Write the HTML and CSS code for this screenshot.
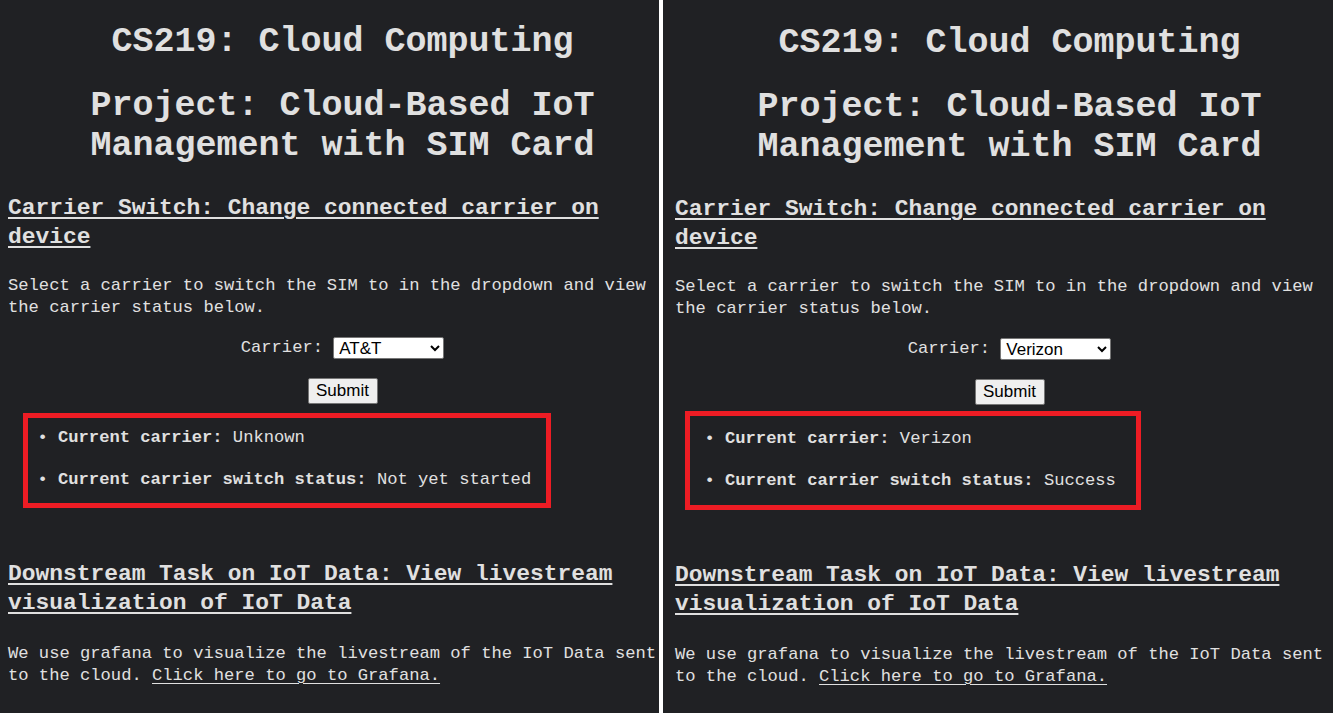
FILE: index.html
```html
<!DOCTYPE html>
<html lang="en">
<head>
<meta charset="utf-8">
<title>CS219: Cloud Computing</title>
<link rel="stylesheet" href="styles.css">
</head>
<body>
<div class="pane pane-left">
  <div class="page">
    <h1 class="title">CS219: Cloud Computing</h1>
    <h1 class="title title-project">Project: Cloud-Based IoT Management with SIM Card</h1>
    <h2 class="section">Carrier Switch: Change connected carrier on device</h2>
    <p class="text">Select a carrier to switch the SIM to in the dropdown and view the carrier status below.</p>
    <form class="carrier-form">
      <div class="carrier-row">
        <label class="carrier-label" for="carrier-left">Carrier:</label>
        <select class="carrier-select" id="carrier-left">
          <option selected>AT&amp;T</option>
          <option>Verizon</option>
          <option>T-Mobile</option>
        </select>
      </div>
      <div class="submit-row">
        <button class="submit-btn" type="button">Submit</button>
      </div>
    </form>
    <ul class="status">
      <li><b>Current carrier:</b> Unknown</li>
      <li><b>Current carrier switch status:</b> Not yet started</li>
    </ul>
    <h2 class="section section-downstream">Downstream Task on IoT Data: View livestream visualization of IoT Data</h2>
    <p class="text text-grafana">We use grafana to visualize the livestream of the IoT Data sent to the cloud. <a class="link" href="#">Click here to go to Grafana.</a></p>
    <div class="annot annot-left"></div>
  </div>
</div>
<div class="divider"></div>
<div class="pane pane-right">
  <div class="page">
    <h1 class="title">CS219: Cloud Computing</h1>
    <h1 class="title title-project">Project: Cloud-Based IoT Management with SIM Card</h1>
    <h2 class="section">Carrier Switch: Change connected carrier on device</h2>
    <p class="text">Select a carrier to switch the SIM to in the dropdown and view the carrier status below.</p>
    <form class="carrier-form">
      <div class="carrier-row">
        <label class="carrier-label" for="carrier-right">Carrier:</label>
        <select class="carrier-select" id="carrier-right">
          <option>AT&amp;T</option>
          <option selected>Verizon</option>
          <option>T-Mobile</option>
        </select>
      </div>
      <div class="submit-row">
        <button class="submit-btn" type="button">Submit</button>
      </div>
    </form>
    <ul class="status">
      <li><b>Current carrier:</b> Verizon</li>
      <li><b>Current carrier switch status:</b> Success</li>
    </ul>
    <h2 class="section section-downstream">Downstream Task on IoT Data: View livestream visualization of IoT Data</h2>
    <p class="text text-grafana">We use grafana to visualize the livestream of the IoT Data sent to the cloud. <a class="link" href="#">Click here to go to Grafana.</a></p>
    <div class="annot annot-right"></div>
  </div>
</div>
</body>
</html>
```

FILE: styles.css
```css
html, body {
  margin: 0;
  padding: 0;
  height: 100%;
  overflow: hidden;
  background: #202124;
}

body {
  display: flex;
  font-family: "Liberation Mono", "DejaVu Sans Mono", monospace;
  font-size: 17.15px;
  line-height: 22px;
  color: #e0e0e0;
}

.pane {
  flex: none;
  height: 713px;
  overflow: hidden;
  background: #202124;
  box-sizing: border-box;
}

.pane-left {
  width: 659px;
}

.divider {
  flex: none;
  width: 4px;
  height: 713px;
  background: #ffffff;
}

.pane-right {
  width: 670px;
  padding-left: 4px;
  padding-top: 1px;
}

.page {
  position: relative;
  display: flow-root;
  width: 685px;
  padding: 0 8px;
  box-sizing: border-box;
}

.title {
  margin: 22px 0 0;
  font-family: "Liberation Mono", monospace;
  font-size: 35px;
  line-height: 40px;
  font-weight: bold;
  text-align: center;
}

.title-project {
  margin-top: 24px;
}

.section {
  margin: 28px 0 0;
  font-size: 22.9px;
  line-height: 29px;
  font-weight: bold;
  text-decoration: underline;
  text-decoration-thickness: 2px;
  text-underline-offset: 3px;
}

.text {
  margin: 23px 0 0;
}

.carrier-form {
  margin: 0;
}

.carrier-row {
  margin-top: 18px;
  height: 22px;
  display: flex;
  justify-content: center;
  align-items: center;
  gap: 10.3px;
}

.carrier-label {
  white-space: nowrap;
}

.carrier-select {
  width: 111px;
  height: 22px;
  margin: 0;
  font-family: "Liberation Sans", Arial, sans-serif;
  font-size: 17px;
  color: #000000;
  background-color: #ffffff;
  border: 1px solid #767676;
  border-radius: 2px;
  padding: 0 0 0 1px;
  box-sizing: border-box;
}

.submit-row {
  margin-top: 19px;
  display: flex;
  justify-content: center;
}

.submit-btn {
  width: 70px;
  height: 26px;
  margin: 0;
  padding: 0 6px;
  font-family: "Liberation Sans", Arial, sans-serif;
  font-size: 17px;
  line-height: 22px;
  color: #000000;
  background: #efefef;
  border: 1px solid #767676;
  border-radius: 2px;
  box-sizing: border-box;
}

.status {
  margin: 23px 0 0;
  padding-left: 50px;
  list-style-type: "\2022  ";
}

.status li + li {
  margin-top: 20px;
}

.section-downstream {
  margin-top: 69px;
}

.text-grafana {
  margin-top: 25px;
}

.link {
  color: inherit;
  text-decoration: underline;
  text-decoration-thickness: 1px;
  text-underline-offset: 3px;
}

.annot {
  position: absolute;
  border: 5px solid #ed1c24;
  box-sizing: border-box;
  pointer-events: none;
}

.annot-left {
  left: 23px;
  top: 413px;
  width: 528px;
  height: 95px;
}

.annot-right {
  left: 18px;
  top: 410px;
  width: 456px;
  height: 99px;
}
```
